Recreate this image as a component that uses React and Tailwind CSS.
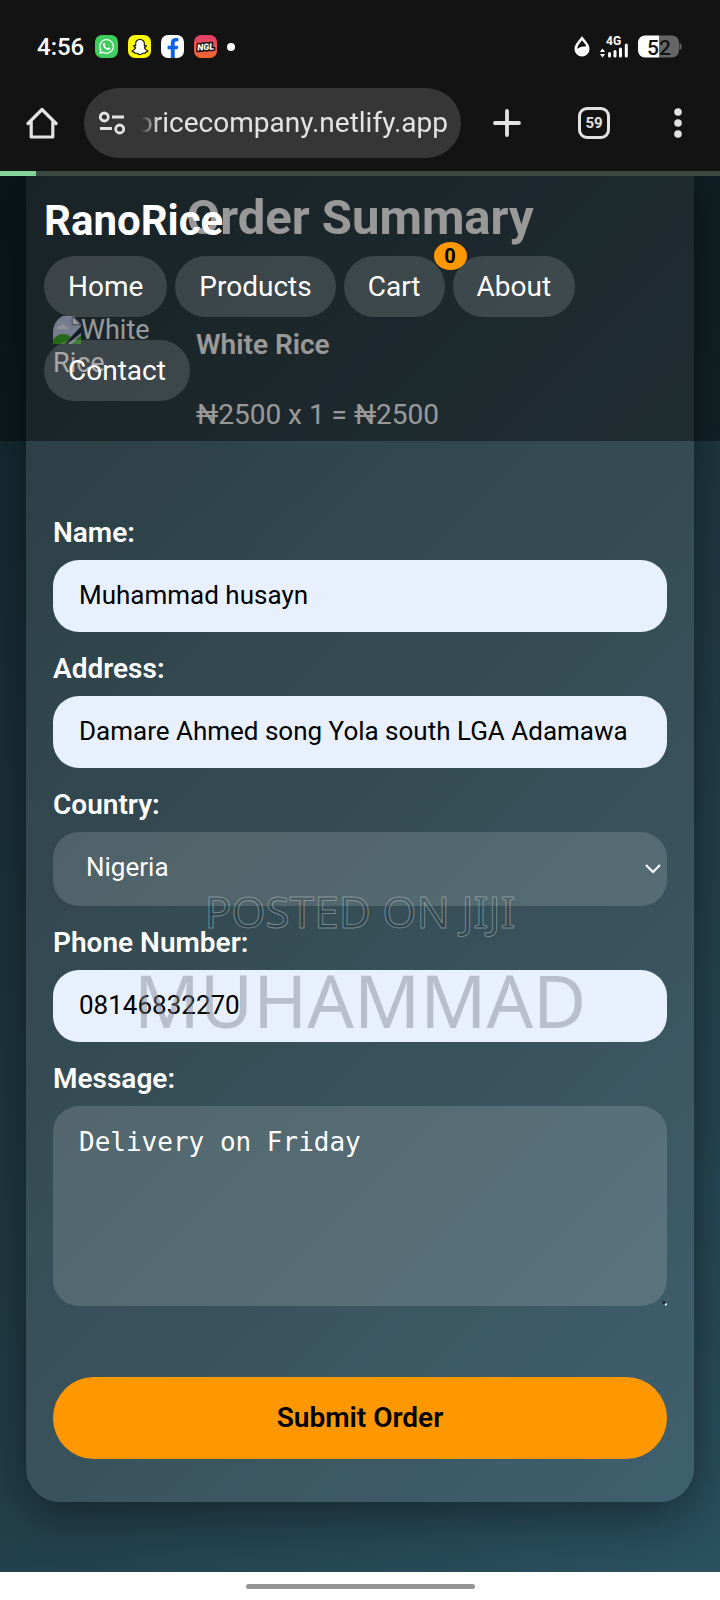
import { useState } from "react";
import { FaFacebookF, FaSnapchatGhost, FaWhatsapp } from "react-icons/fa";

const navLinks = ["Home", "Products", "Cart", "About", "Contact"];

function StatusBar() {
  return (
    <div className="flex items-center justify-between pl-[37px] pr-[38px] pt-[35px]">
      <div className="flex h-[23px] items-center gap-[10px]">
        <span className="mr-px text-[24px] font-medium leading-none text-white">4:56</span>
        <span className="flex size-[23px] items-center justify-center rounded-[7px] bg-[#3fce5e] text-white">
          <FaWhatsapp size={17} />
        </span>
        <span className="flex size-[23px] items-center justify-center rounded-[7px] bg-[#fffc00] text-white">
          <FaSnapchatGhost size={16} stroke="#111" strokeWidth={36} className="overflow-visible" />
        </span>
        <span className="flex size-[23px] items-end justify-center overflow-hidden rounded-[7px] bg-white text-[#0b62ec]">
          <FaFacebookF size={20} />
        </span>
        <span className="size-[23px] overflow-hidden rounded-[7px] bg-linear-to-b from-[#e53a68] to-[#f0682c]">
          <svg viewBox="0 0 23 23" className="size-full">
            <text
              x="11.5"
              y="15"
              textAnchor="middle"
              transform="rotate(-5 11.5 11.5)"
              fill="#fff"
              stroke="#111"
              strokeWidth="3"
              paintOrder="stroke"
              strokeLinejoin="round"
              className="font-[Roboto] text-[9px] font-black italic"
            >
              NGL
            </text>
          </svg>
        </span>
        <span className="size-2 rounded-full bg-white" />
      </div>

      <div className="flex h-[23px] items-center gap-[10px]">
        <svg viewBox="0 0 16 21" className="h-[21px] w-4">
          <path d="M8 0C5 4.500 0.500 8.200 0.500 13a7.500 7.500 0 0 0 15 0C15.500 8.200 11 4.500 8 0z" fill="#fff" />
          <path d="M8 4.200C6 7 3.300 9.500 3.200 12.800l4-2 5.300-.6C11.600 8.200 9.500 6.200 8 4.200z" fill="#131313" />
        </svg>
        <svg viewBox="0 0 28 22" className="h-[22px] w-7">
          <text x="6" y="9" fill="#fff" className="font-[Roboto] text-[12px] font-bold">
            4G
          </text>
          <path d="M2.500 12.500l2.500 3.500H0zM2.500 21.500l2.500-3.500H0z" fill="#fff" />
          <path
            d="M9.500 17.500v2.500M15 15.500v4.500M20.500 13v7M26.300 9v11"
            stroke="#fff"
            strokeWidth="3"
            strokeLinecap="round"
            fill="none"
          />
        </svg>
        <svg viewBox="0 0 44 23" className="h-[23px] w-11">
          <path d="M7 0.500h14v22H7a7 7 0 0 1-7-7v-8a7 7 0 0 1 7-7z" fill="#fff" />
          <path d="M21 0.500h13a7 7 0 0 1 7 7v8a7 7 0 0 1-7 7H21z" fill="#666" />
          <path d="M42 8.500c1.500.5 1.500 5.500 0 6z" fill="#666" stroke="#666" />
          <text x="9" y="19.500" fill="#131313" className="font-[Roboto] text-[21px] font-medium">
            52
          </text>
        </svg>
      </div>
    </div>
  );
}

function BrowserBar() {
  return (
    <div className="flex items-center pb-[13px] pl-[26px] pr-[38px] pt-[30px] text-[#e3e3e3]">
      <button aria-label="Home page">
        <svg viewBox="0 0 32 32" className="size-8" fill="none" stroke="currentColor" strokeWidth="3.200" strokeLinejoin="round" strokeLinecap="round">
          <path d="M2 16.500L16 2.500l14 14M5.200 15v15h21.600V15" />
        </svg>
      </button>
      <button className="ml-[26px] flex h-[70px] min-w-0 flex-1 items-center rounded-full bg-[#363636] pl-[15px] pr-[13px]">
        <svg viewBox="0 0 26 24" className="h-6 w-[26px] shrink-0" fill="none" stroke="currentColor" strokeWidth="2.800">
          <circle cx="5.300" cy="6" r="4" />
          <path d="M13 6h12M1 17.500h12" />
          <circle cx="20.700" cy="18" r="4" />
        </svg>
        <span className="ml-[14px] flex min-w-0 flex-1 justify-end overflow-hidden whitespace-nowrap mask-[linear-gradient(to_right,transparent_2px,black_20px)] text-[28px] leading-[40px]">
          oricecompany.netlify.app
        </span>
      </button>
      <button aria-label="New tab" className="ml-8">
        <svg viewBox="0 0 28 28" className="size-7" stroke="currentColor" strokeWidth="3.800" strokeLinecap="round">
          <path d="M14 2v24M2 14h24" />
        </svg>
      </button>
      <button
        aria-label="Open tabs"
        className="ml-[57px] flex size-8 items-center justify-center rounded-[9px] border-3 border-current text-[15px] font-bold"
      >
        59
      </button>
      <button aria-label="Menu" className="ml-16">
        <svg viewBox="0 0 8 30" className="h-[30px] w-2" fill="currentColor">
          <circle cx="4" cy="4" r="3.800" />
          <circle cx="4" cy="15" r="3.800" />
          <circle cx="4" cy="26" r="3.800" />
        </svg>
      </button>
    </div>
  );
}

function SiteHeader() {
  return (
    <header className="absolute inset-x-0 top-0 bg-black/40 px-11 pb-10 pt-5">
      <a href="#home" className="block text-[42px] font-bold leading-[50px] text-white">
        RanoRice
      </a>
      <nav className="mt-[10px] flex flex-wrap gap-x-2 gap-y-[23px]">
        {navLinks.map((label) => (
          <a
            key={label}
            href={`#${label.toLowerCase()}`}
            className="relative rounded-full bg-white/15 px-6 text-[28px] leading-[61px] text-white"
          >
            {label}
            {label === "Cart" && (
              <span className="absolute -right-[22px] -top-[14px] flex h-7 w-[33px] items-center justify-center rounded-[50%] bg-[#ff9800] text-[20px] font-bold leading-none text-black">
                0
              </span>
            )}
          </a>
        ))}
      </nav>
    </header>
  );
}

// Placeholder the browser shows when a product photo fails to load
function BrokenImage({ alt }) {
  return (
    <div className="w-[117px] shrink-0 overflow-hidden rounded-tl-[18px] text-[27px] leading-[33px] text-white">
      <svg viewBox="0 0 16 16" className="inline size-7 align-[-5px]">
        <path d="M0 0h11l5 5v11H0z" fill="#c3cfee" />
        <path d="M11 0v5h5z" fill="#fff" stroke="#8e96a5" strokeWidth="0.800" />
        <path d="M2 7.500c0-1.200 1-2 2.200-1.800C4.800 4.500 7 4.600 7.400 6c1 0 1.600.6 1.600 1.500z" fill="#eef2fc" />
        <path d="M0 16v-2.500C3 9.500 8 9.500 10 12l-3 4z" fill="#3fae2a" />
        <path d="M16 6v3.500L8.500 16H6.500z" fill="#1e2f38" />
        <path d="M16 11v5h-5.500z" fill="#3fae2a" />
      </svg>
      {alt}
    </div>
  );
}

function Field({ id, label, children }) {
  return (
    <div className="mb-5">
      <label htmlFor={id} className="mb-[10px] block text-[28px] font-semibold leading-[34px] text-white">
        {label}
      </label>
      {children}
    </div>
  );
}

const filledInput =
  "block h-[72px] w-full rounded-[26px] bg-[#e8f0fe] pl-[26px] pr-[26px] pb-[3px] text-[26px] text-black outline-none";

function OrderForm() {
  const [form, setForm] = useState({
    name: "Muhammad husayn",
    address: "Damare Ahmed song Yola south LGA Adamawa state",
    country: "Nigeria",
    phone: "08146832270",
    message: "Delivery on Friday",
  });

  const handleChange = (e) => setForm({ ...form, [e.target.id]: e.target.value });

  return (
    <form onSubmit={(e) => e.preventDefault()} className="mt-[84px]">
      <Field id="name" label="Name:">
        <input id="name" value={form.name} onChange={handleChange} className={filledInput} />
      </Field>
      <Field id="address" label="Address:">
        <input
          id="address"
          value={form.address}
          onChange={handleChange}
          className="block h-[72px] w-full rounded-[26px] bg-[#e8f0fe] pb-[3px] pl-[26px] pr-8 text-[26px] text-black outline-none"
        />
      </Field>
      <Field id="country" label="Country:">
        <div className="relative">
          <select
            id="country"
            value={form.country}
            onChange={handleChange}
            className="block h-[74px] w-full appearance-none rounded-[26px] bg-white/15 px-[33px] pb-[3px] text-[26px] text-white outline-none"
          >
            <option>Nigeria</option>
          </select>
          <svg
            viewBox="0 0 16 10"
            className="pointer-events-none absolute right-[6px] top-8 h-[10px] w-4"
            fill="none"
            stroke="#fff"
            strokeWidth="2.200"
          >
            <path d="M1 1l7 7 7-7" />
          </svg>
        </div>
      </Field>
      <Field id="phone" label="Phone Number:">
        <input id="phone" type="tel" value={form.phone} onChange={handleChange} className={filledInput} />
      </Field>
      <Field id="message" label="Message:">
        <div className="relative">
          <textarea
            id="message"
            value={form.message}
            onChange={handleChange}
            className="block h-[200px] w-full resize-none rounded-[26px] bg-white/15 px-[26px] py-5 font-['DejaVu_Sans_Mono',monospace] text-[26px] leading-[32px] text-white outline-none"
          />
          {/* tip of the resize grip left outside the rounded corner */}
          <svg viewBox="0 0 6 6" className="pointer-events-none absolute bottom-0 right-0 size-[6px]">
            <circle cx="3" cy="2.500" r="1.500" fill="#10222b" />
            <circle cx="5" cy="4.500" r="1.200" fill="#e6eef1" />
          </svg>
        </div>
      </Field>
      <button
        type="submit"
        className="mt-[71px] block h-[82px] w-full rounded-full bg-[#ff9800] text-[28px] font-semibold text-black"
      >
        Submit Order
      </button>
    </form>
  );
}

function Watermark() {
  return (
    <div className="pointer-events-none absolute inset-x-0 top-[700px] flex flex-col items-center font-['Noto_Sans',sans-serif]">
      <span className="text-[44px] leading-[70px] text-black/10 [-webkit-text-stroke:1px_rgba(200,215,220,0.45)]">
        POSTED ON JIJI
      </span>
      <span className="text-[73px] leading-[108px] text-[#80838c]/45">MUHAMMAD</span>
    </div>
  );
}

function App() {
  return (
    <div className="flex min-h-screen flex-col bg-white font-[Roboto,sans-serif]">
      <div className="bg-[#131313]">
        <StatusBar />
        <BrowserBar />
        <div className="h-[5px] bg-[#3d4a43]">
          <div className="h-full w-[5%] bg-[#84d39c]" />
        </div>
      </div>

      <main className="relative flex-1 overflow-hidden bg-[linear-gradient(135deg,#0f2027_-10%,#203a43_52%,#2c5364_105%)] px-[26px] pb-[70px]">
        <section className="rounded-b-[34px] bg-white/10 px-[27px] pb-[43px] pt-3 text-white shadow-[0_12px_50px_rgba(0,0,0,0.45)]">
          <h2 className="text-center text-[49px] font-bold leading-[60px]">Order Summary</h2>
          <div className="mt-[66px] flex gap-[26px]">
            <BrokenImage alt="White Rice" />
            <div className="pt-[14px] text-[28px] leading-[34px]">
              <h4 className="font-semibold">White Rice</h4>
              <p className="mt-9">₦2500 x 1 = ₦2500</p>
            </div>
          </div>
          <OrderForm />
        </section>
        <SiteHeader />
        <Watermark />
      </main>

      <div className="flex h-7 items-center justify-center">
        <div className="h-[5px] w-[229px] rounded-full bg-[#949494]" />
      </div>
    </div>
  );
}

export default App;
